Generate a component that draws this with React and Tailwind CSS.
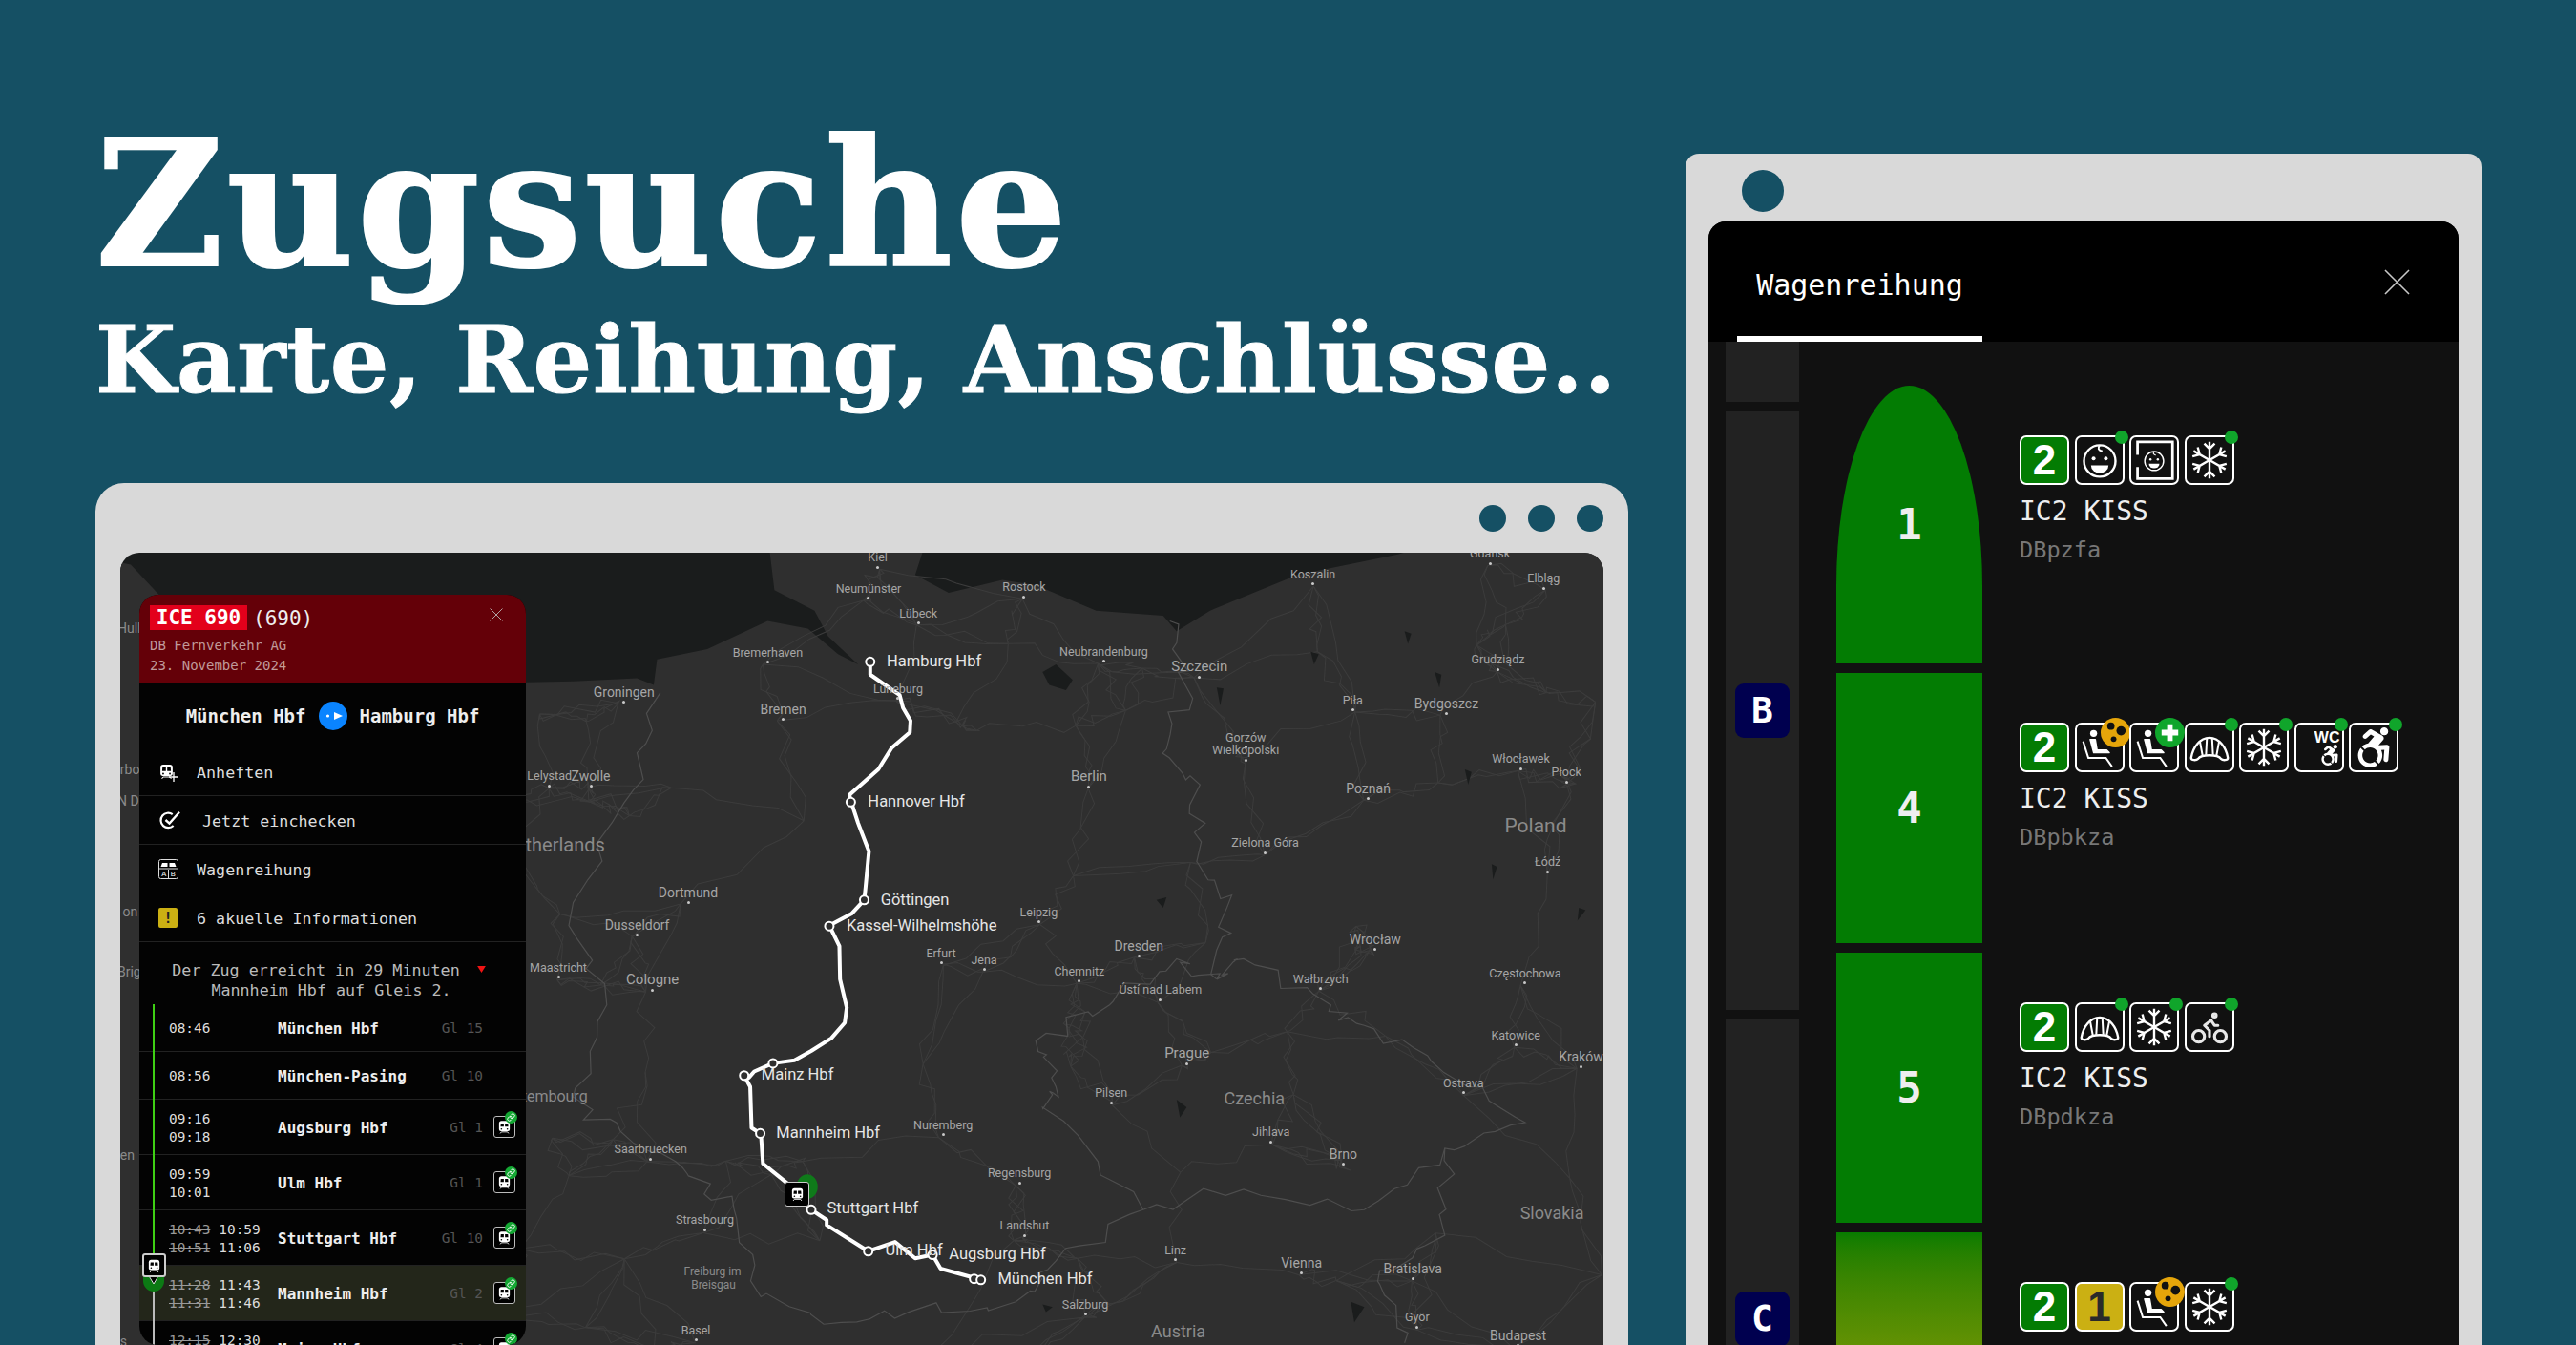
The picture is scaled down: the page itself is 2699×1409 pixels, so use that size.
import { Bike, Link } from 'lucide-react'
import { FaAccessibleIcon } from 'react-icons/fa'

// The map sketch uses a 1568x1568 grid over the page region starting at (600,570)
const px = (x) => 474 + x / 1.4255
const py = (y) => -9 + y / 1.8667
const pts = (list) => list.map(([x, y]) => `${px(x).toFixed(1)},${py(y).toFixed(1)}`).join(' ')

const land = [[-200, 1600], [-200, 500], [-110, 300], [-70, 270], [0, 268], [95, 262], [120, 275], [125, 225], [200, 205], [290, 150], [350, 165], [395, 215], [425, 235], [380, 180], [360, 130], [300, 90], [290, -20], [530, -20], [510, 60], [560, 95], [640, 70], [690, 80], [780, 130], [880, 140], [900, 170], [950, 130], [1080, 60], [1230, 20], [1340, -20], [1540, -20], [1540, 1570], [-200, 1570]]
const uk = [[-700, 30], [-660, 40], [-610, 110], [-590, 260], [-560, 600], [-560, 1600], [-700, 1600]]
const lakes = [[[700, 250], [720, 235], [745, 265], [735, 285], [710, 275]], [[1100, 210], [1112, 215], [1105, 235]], [[1240, 170], [1250, 175], [1245, 195]], [[1285, 250], [1295, 255], [1292, 280]], [[960, 280], [970, 282], [965, 315]], [[870, 695], [885, 690], [880, 710]], [[1330, 440], [1340, 445], [1335, 470]], [[1370, 625], [1378, 630], [1372, 655]], [[1500, 710], [1510, 715], [1498, 735]], [[1160, 1480], [1180, 1490], [1165, 1520]], [[700, 1485], [715, 1490], [705, 1500]], [[900, 1085], [915, 1100], [905, 1120]]]

const borderLines = [
  [[890, 150], [915, 280], [885, 400], [935, 470], [930, 620], [975, 710], [960, 850]],
  [[960, 850], [900, 810], [800, 900], [690, 970], [720, 1060], [700, 1100], [850, 1300], [1000, 1260], [1180, 1300], [1300, 1180], [1420, 1130], [1280, 1010], [1180, 940], [1130, 900], [1000, 810], [960, 850]],
  [[850, 1300], [720, 1400], [660, 1480], [500, 1500], [400, 1520], [280, 1470], [240, 1300], [170, 1230], [90, 1170], [0, 1080], [50, 900], [0, 700], [90, 480], [130, 290]],
  [[1300, 1180], [1300, 1350], [1200, 1440], [1240, 1560]],
]

const labels = [
  ['Kiel', 441, 27], ['Neumünster', 393, 88], ['Rostock', 642, 85], ['Koszalin', 1072, 60], ['Gdańsk', 1340, 20], ['Elbląg', 1426, 68],
  ['Lübeck', 488, 136], ['Bremerhaven', 239, 213], ['Neubrandenburg', 727, 211], ['Szczecin', 894, 239, 15], ['Grudziądz', 1342, 227],
  ['Groningen', 31, 289, 14], ['Lüneburg', 449, 284], ['Bremen', 280, 323, 14], ['Piła', 1150, 306], ['Bydgoszcz', 1257, 312, 14],
  ['Gorzów', 975, 379], ['Wielkopolski', 955, 404], ['Włocławek', 1373, 421], ['Płock', 1462, 447], ['Zwolle', -2, 454, 14], ['Lelystad', -68, 455, 12.5],
  ['Berlin', 744, 455, 15], ['Poznań', 1155, 478, 14], ['Zielona Góra', 984, 585], ['Łódź', 1437, 623], ['Dortmund', 128, 681, 14], ['Leipzig', 668, 721],
  ['Dusseldorf', 48, 744, 14], ['Wrocław', 1160, 772, 14], ['Erfurt', 528, 801], ['Jena', 595, 814], ['Dresden', 809, 785, 14], ['Chemnitz', 719, 836],
  ['Częstochowa', 1369, 840], ['Maastricht', -64, 829], ['Cologne', 80, 853, 15], ['Wałbrzych', 1076, 851], ['Ústí nad Labem', 816, 873], ['Katowice', 1372, 961],
  ['Kraków', 1473, 1002, 14], ['Prague', 884, 996, 15], ['Ostrava', 1300, 1055], ['Pilsen', 780, 1074], ['Jihlava', 1015, 1151], ['Nuremberg', 509, 1137],
  ['Brno', 1130, 1193, 14], ['Saarbruecken', 62, 1184], ['Regensburg', 620, 1231], ['Strasbourg', 154, 1323], ['Landshut', 638, 1334], ['Linz', 884, 1381],
  ['Vienna', 1058, 1405, 14], ['Bratislava', 1211, 1417, 14], ['Salzburg', 731, 1488], ['Györ', 1243, 1513], ['Basel', 162, 1538], ['Budapest', 1370, 1548, 14],
]

const plainLabels = [
  ['Freiburg im', 166, 1422, 12], ['Breisgau', 177, 1448, 12], ['Netherlands', -106, 588, 20], ['Poland', 1392, 551, 21], ['Czechia', 973, 1085, 18],
  ['Luxembourg', -104, 1081, 16], ['Slovakia', 1415, 1308, 18], ['Austria', 864, 1540, 18], ['Hull', -680, 164, 14], ['rbo', -676, 440, 14],
  ['N D', -680, 502, 14], ['on', -672, 719, 14], ['Brig', -680, 836, 14], ['en', -676, 1195, 14], ['s', -676, 1559, 14],
]

const stations = [
  ['Hamburg Hbf', 469, 230], ['Hannover Hbf', 441, 504], ['Göttingen', 460, 696], ['Kassel-Wilhelmshöhe', 409, 746], ['Mainz Hbf', 282, 1037],
  ['Mannheim Hbf', 304, 1151], ['Stuttgart Hbf', 380, 1300], ['Ulm Hbf', 467, 1382], ['Augsburg Hbf', 562, 1389], ['München Hbf', 635, 1437],
]

const route = [[443, 230], [443, 255], [487, 295], [492, 320], [503, 345], [502, 368], [475, 398], [455, 440], [412, 490], [415, 505], [425, 545], [441, 600], [436, 670], [434, 695], [415, 722], [382, 745], [397, 785], [398, 850], [408, 905], [405, 935], [385, 965], [355, 990], [330, 1008], [298, 1014], [270, 1030], [262, 1042], [255, 1038], [264, 1060], [266, 1140], [280, 1152], [283, 1210], [318, 1247], [355, 1300], [378, 1320], [378, 1330], [440, 1381], [480, 1363], [510, 1395], [536, 1388], [548, 1415], [598, 1433], [608, 1437]]
const stops = [[443, 230], [414, 504], [434, 695], [382, 746], [298, 1014], [255, 1038], [279, 1151], [355, 1300], [440, 1381], [536, 1388], [598, 1435], [608, 1437]]

let seed = 17
const rnd = () => {
  seed = (seed * 16807) % 2147483647
  return seed / 2147483647
}

// break a line into short wobbly pieces so it reads as a drawn road or border
function wobble(line, pieces, amount) {
  const out = [line[0]]
  for (let i = 1; i < line.length; i++) {
    const a = line[i - 1]
    const b = line[i]
    for (let t = 1; t < pieces; t++) {
      out.push([a[0] + ((b[0] - a[0]) * t) / pieces + (rnd() - 0.5) * amount, a[1] + ((b[1] - a[1]) * t) / pieces + (rnd() - 0.5) * amount])
    }
    out.push(b)
  }
  return out
}

// thin road network between nearby towns, only there to give the map its texture
function buildRoads() {
  const nodes = labels.map(([name, x, y]) => [x + name.length * 4, y + 22])
  for (let i = 0; i < 60; i++) nodes.push([rnd() * 1640 - 100, rnd() * 1500 + 150])
  const roads = []
  nodes.forEach((a) => {
    const near = nodes
      .filter((b) => b !== a)
      .sort((b, c) => Math.hypot(b[0] - a[0], b[1] - a[1]) - Math.hypot(c[0] - a[0], c[1] - a[1]))
      .slice(0, 3)
    near.forEach((b) => roads.push(wobble([a, b], 5, 28)))
  })
  return roads
}
const roads = buildRoads()
const borders = borderLines.map((b) => wobble(b, 6, 30))

const mono = "font-['DejaVu_Sans_Mono',monospace]"

function TrainGlyph({ className = 'w-5 h-5' }) {
  return (
    <svg viewBox="0 0 24 24" className={className}>
      <path d="M7 2h10a4 4 0 0 1 4 4v10a3 3 0 0 1-3 3H6a3 3 0 0 1-3-3V6a4 4 0 0 1 4-4z" fill="#fff" />
      <path d="M6 6.5h5v5H5.5zM13 6.5h5l.5 5H13z" fill="#000" />
      <circle cx="7" cy="15.5" r="1.3" fill="#000" />
      <circle cx="17" cy="15.5" r="1.3" fill="#000" />
      <path d="M7 20.5h10M5 23l2-2.5M19 23l-2-2.5" stroke="#fff" strokeWidth="1.5" fill="none" />
    </svg>
  )
}

function PinIcon() {
  return (
    <span className="relative w-[20px] h-[21px] block">
      <TrainGlyph className="w-[17px] h-[20px]" />
      <svg viewBox="0 0 10 10" className="absolute -right-[1px] bottom-0 w-[10px] h-[10px]">
        <path d="M5 0v10M0 5h10" stroke="#fff" strokeWidth="1.3" />
      </svg>
    </span>
  )
}

function CheckIcon() {
  return (
    <svg viewBox="0 0 26 22" className="w-[24px] h-[20px]">
      <path d="M16 4.5a8.5 8.5 0 1 0 1 13" stroke="#fff" strokeWidth="2.4" fill="none" />
      <path d="M8 11l4.5 4L24 2" stroke="#fff" strokeWidth="2.6" fill="none" />
    </svg>
  )
}

function CoachIcon() {
  return (
    <svg viewBox="0 0 21 21" className="w-[21px] h-[21px]">
      <rect x="0.5" y="0.5" width="20" height="20" rx="2" fill="none" stroke="#ddd" />
      <path d="M2.5 8l1.5-4h5.5v4zM11.5 8V4H17l1.5 4z" fill="#fff" />
      <path d="M1 10h19M10.5 11v9" stroke="#ddd" />
      <text x="5.8" y="18" fontSize="7.5" fill="#fff" textAnchor="middle" fontFamily="Liberation Sans">A</text>
      <text x="15.2" y="18" fontSize="7.5" fill="#fff" textAnchor="middle" fontFamily="Liberation Sans">B</text>
    </svg>
  )
}

function Close({ className }) {
  return (
    <svg viewBox="0 0 28 28" className={className}>
      <path d="M1 1L27 27M27 1L1 27" stroke="#c8c8c8" strokeWidth="1.6" />
    </svg>
  )
}

function MenuRow({ icon, textClass = '', children }) {
  return (
    <div className="h-[51px] flex items-center pl-[20px] text-[16.7px] text-[#ddd] border-b border-[#222]">
      <span className="w-[40px] flex items-center">{icon}</span>
      <span className={`pt-[3px] ${textClass}`}>{children}</span>
    </div>
  )
}

const stopsList = [
  { sched: ['08:46'], name: 'München Hbf', gl: 'Gl 15' },
  { sched: ['08:56'], name: 'München-Pasing', gl: 'Gl 10' },
  { sched: ['09:16', '09:18'], name: 'Augsburg Hbf', gl: 'Gl 1', link: true },
  { sched: ['09:59', '10:01'], name: 'Ulm Hbf', gl: 'Gl 1', link: true },
  { sched: ['10:43', '10:51'], real: ['10:59', '11:06'], name: 'Stuttgart Hbf', gl: 'Gl 10', link: true },
  { sched: ['11:28', '11:31'], real: ['11:43', '11:46'], name: 'Mannheim Hbf', gl: 'Gl 2', link: true, current: true },
  { sched: ['12:15', '12:21'], real: ['12:30', '12:36'], name: 'Mainz Hbf', gl: 'Gl 4', link: true },
]

function StopRow({ stop }) {
  const tall = stop.sched.length > 1
  return (
    <div className={`flex items-center pl-[31px] pr-[11px] border-b border-[#222] ${tall ? 'h-[58px]' : 'h-[50px]'} ${stop.current ? 'bg-[#23261a]' : ''}`}>
      <div className="w-[114px] shrink-0 flex gap-[9px] pt-[2px] text-[14.4px] leading-[18.7px]">
        <div className={stop.real ? 'line-through text-[#999]' : 'text-[#ddd]'}>
          {stop.sched.map((t) => <div key={t}>{t}</div>)}
        </div>
        {stop.real && (
          <div className="text-[#ddd]">
            {stop.real.map((t) => <div key={t}>{t}</div>)}
          </div>
        )}
      </div>
      <div className="flex-1 pt-[2px] font-bold text-[16px] text-[#eee] whitespace-nowrap">{stop.name}</div>
      <div className="pt-[2px] text-[14.4px] text-[#555] whitespace-nowrap">{stop.gl}</div>
      <div className="w-[23px] h-[23px] ml-[11px] shrink-0 relative">
        {stop.link && (
          <>
            <div className="w-[23px] h-[23px] rounded-[3px] border border-[#bbb] bg-black flex items-center justify-center">
              <TrainGlyph className="w-[15px] h-[17px]" />
            </div>
            <div className="absolute -top-[5px] -right-[2px] w-[13px] h-[13px] rounded-full bg-[#14a833] flex items-center justify-center">
              <Link className="w-[9px] h-[9px] text-white" strokeWidth={2.5} />
            </div>
          </>
        )}
      </div>
    </div>
  )
}

function TripPanel() {
  return (
    <div className={`absolute left-[20px] top-[44px] bottom-0 w-[405px] rounded-[20px] overflow-hidden bg-[#030303] ${mono}`}>
      <div className="h-[93px] bg-[#640008] pl-[11px] pt-[11px] relative">
        <div className="flex items-center gap-[6px] h-[26px]">
          <span className="h-[26px] w-[102px] bg-[#e3001b] text-white font-bold text-[21px] leading-[26px] text-center whitespace-nowrap">ICE 690</span>
          <span className="text-[21px] text-[#eee] mt-[3px]">(690)</span>
        </div>
        <div className="text-[14px] leading-[21px] text-[#c09a9a] mt-[6px]">DB Fernverkehr AG</div>
        <div className="text-[14px] leading-[21px] text-[#c09a9a]">23. November 2024</div>
        <Close className="absolute top-[14px] right-[24px] w-[14px] h-[14px]" />
      </div>
      <div className="h-[67px] flex items-center justify-center gap-[13px] pt-[1px] text-[19px] font-bold text-[#eee]">
        <span>München Hbf</span>
        <svg viewBox="0 0 30 30" className="w-[30px] h-[30px] shrink-0">
          <circle cx="15" cy="15" r="15" fill="#0a84ff" />
          <circle cx="9.5" cy="15" r="1.6" fill="#fff" />
          <path d="M16 11l9 4-9 4z" fill="#fff" />
        </svg>
        <span>Hamburg Hbf</span>
      </div>
      <MenuRow icon={<PinIcon />}>Anheften</MenuRow>
      <MenuRow icon={<CheckIcon />} textClass="ml-[6px]">Jetzt einchecken</MenuRow>
      <MenuRow icon={<CoachIcon />}>Wagenreihung</MenuRow>
      <MenuRow icon={<span className="w-[20px] h-[21px] rounded-[2px] bg-[#cbb013] text-[#222] font-bold text-[16px] leading-[21px] text-center">!</span>}>6 akuelle Informationen</MenuRow>
      <div className="h-[65px] pt-[19px] relative text-center text-[16.7px] leading-[21px] text-[#bbb]">
        <div className="pr-[35px] whitespace-nowrap">Der Zug erreicht in 29 Minuten</div>
        <div className="pr-[3px] whitespace-nowrap">Mannheim Hbf auf Gleis 2.</div>
        <svg viewBox="0 0 10 8" className="absolute left-[354px] top-[25px] w-[9px] h-[7px]">
          <path d="M0 0h10L5 8z" fill="#f01414" />
        </svg>
      </div>
      <div className="relative">
        {stopsList.map((s) => <StopRow key={s.name} stop={s} />)}
        <div className="absolute left-[14px] top-0 h-[264px] w-[2px] bg-[#3ecf14]" />
        <div className="absolute left-[14px] top-[285px] bottom-0 w-[2px] bg-[#bbb]" />
        <div className="absolute left-[4px] top-[269px] w-[22px] h-[18px] rounded-b-full bg-[#0c7a14] mt-[14px]" />
        <svg viewBox="0 0 14 10" className="absolute left-[8px] top-[283px] w-[14px] h-[10px]">
          <path d="M1 0h12L7 10z" fill="#000" stroke="#ddd" />
        </svg>
        <div className="absolute left-[3px] top-[261px] w-[25px] h-[25px] rounded-[3px] border-2 border-[#ccc] bg-black flex items-center justify-center">
          <TrainGlyph className="w-[15px] h-[18px]" />
        </div>
      </div>
    </div>
  )
}

function MapCanvas() {
  return (
    <div className="relative flex-1 bg-[#1a1c1c] rounded-t-[20px] overflow-hidden font-['Roboto',sans-serif]">
      <svg className="absolute inset-0 w-full h-full" viewBox="0 0 1552 830" preserveAspectRatio="xMinYMin slice">
        <polygon points={pts(land)} fill="#2f2f2f" />
        <polygon points={pts(uk)} fill="#2f2f2f" />
        {roads.map((r, i) => <polyline key={i} points={pts(r)} fill="none" stroke="#3c3c3c" strokeWidth="1" />)}
        {borders.map((b, i) => <polyline key={i} points={pts(b)} fill="none" stroke="#4e4e4e" strokeWidth="1.2" />)}
        {lakes.map((l, i) => <polygon key={i} points={pts(l)} fill="#1a1c1c" />)}
        <ellipse cx={px(349)} cy={py(1255)} rx="11" ry="13" fill="#0f7a1a" />
        <polyline points={pts(route)} fill="none" stroke="#fff" strokeWidth="4" strokeLinejoin="round" />
        {stops.map(([x, y], i) => <circle key={i} cx={px(x)} cy={py(y)} r="4.5" fill="#2f2f2f" stroke="#fff" strokeWidth="2" />)}
      </svg>
      {labels.map(([name, x, y, size = 12.5]) => (
        <div key={name} className="absolute flex flex-col items-center gap-[2px] text-[#a6a6a6] leading-none whitespace-nowrap" style={{ left: px(x), top: py(y) - size / 2, fontSize: size }}>
          {name}
          <span className="w-[3px] h-[3px] rounded-full bg-[#c8c8c8]" />
        </div>
      ))}
      {plainLabels.map(([name, x, y, size]) => (
        <div key={name} className="absolute text-[#8a8a8a] leading-none whitespace-nowrap" style={{ left: px(x), top: py(y) - size / 2, fontSize: size }}>
          {name}
        </div>
      ))}
      {stations.map(([name, x, y]) => (
        <div key={name} className="absolute text-[16.5px] leading-none text-[#e6e6e6] whitespace-nowrap -translate-y-1/2" style={{ left: px(x), top: py(y) }}>
          {name}
        </div>
      ))}
      <div className="absolute w-[26px] h-[26px] rounded-[3px] border border-[#ccc] bg-black flex items-center justify-center -translate-x-1/2 -translate-y-1/2" style={{ left: px(335), top: py(1271) }}>
        <TrainGlyph className="w-[15px] h-[18px]" />
      </div>
      <TripPanel />
    </div>
  )
}

function Feat({ dot, children, className = '' }) {
  return (
    <div className={`relative w-[52px] h-[52px] rounded-[7px] border-2 border-white flex items-center justify-center shrink-0 ${className}`}>
      {children}
      {dot && <span className="absolute -top-[7px] -right-[6px] w-[14px] h-[14px] rounded-full bg-[#10a52b]" />}
    </div>
  )
}

const ClassBadge = ({ n }) => (
  <Feat className={n === 2 ? 'bg-[#037c03]' : 'bg-[#cbb013]'}>
    <span className={`font-['Liberation_Sans',sans-serif] font-bold text-[44px] leading-none ${n === 2 ? 'text-white' : 'text-[#2a2a2a]'}`}>{n}</span>
  </Feat>
)

const Ico = ({ children, size = 'w-[44px] h-[44px]' }) => (
  <svg viewBox="0 0 48 48" className={size} fill="none" stroke="#fff">{children}</svg>
)

function BabyFaceShape() {
  return (
    <>
      <circle cx="24" cy="25" r="18" strokeWidth="2.6" />
      <circle cx="17" cy="22" r="2.2" fill="#fff" stroke="none" />
      <circle cx="31" cy="22" r="2.2" fill="#fff" stroke="none" />
      <path d="M14 30h20a10 9 0 0 1-20 0z" fill="#fff" stroke="none" />
      <path d="M24 7q-4 5 3 7" strokeWidth="2.2" />
    </>
  )
}

const BabyFace = () => <Ico><BabyFaceShape /></Ico>
const BabyFrame = () => (
  <Ico>
    <path d="M5 18V3h40v42H5V32" strokeWidth="3" />
    <g transform="translate(9.6 10) scale(0.6)"><BabyFaceShape /></g>
  </Ico>
)
const Flake = () => (
  <Ico>
    {[0, 60, 120, 180, 240, 300].map((a) => (
      <g key={a} transform={`rotate(${a} 24 24)`}>
        <path d="M24 24V3M24 11l-6-6M24 11l6-6" strokeWidth="2.6" />
      </g>
    ))}
  </Ico>
)

function SeatShape() {
  return (
    <>
      <circle cx="17" cy="8" r="4" fill="#fff" stroke="none" />
      <path d="M13 15h6l2 12h11l3 3H17z" fill="#fff" stroke="#fff" strokeWidth="1.5" strokeLinejoin="round" />
      <path d="M5 17l6 19h20l7 10" strokeWidth="2.2" />
    </>
  )
}

const Seat = ({ badge }) => (
  <>
    <Ico><SeatShape /></Ico>
    {badge === 'blind' && (
      <svg viewBox="0 0 32 32" className="absolute -top-[7px] -right-[8px] w-[31px] h-[31px]">
        <circle cx="16" cy="16" r="16" fill="#e5a50a" />
        <circle cx="11" cy="9" r="4" fill="#111" />
        <circle cx="22" cy="14" r="5" fill="#111" />
        <circle cx="14" cy="23" r="3" fill="#111" />
      </svg>
    )}
    {badge === 'plus' && (
      <svg viewBox="0 0 32 32" className="absolute -top-[7px] -right-[8px] w-[31px] h-[31px]">
        <circle cx="16" cy="16" r="16" fill="#10a52b" />
        <path d="M16 7v18M7 16h18" stroke="#fff" strokeWidth="6" />
      </svg>
    )}
  </>
)

const Croissant = () => (
  <Ico>
    <path d="M3 36C5 24 13 13 24 13s19 11 21 23c.5 3-6 3-8 1-2-3-5-4-13-4s-11 1-13 4c-2 2-8.500 2-8-1z" strokeWidth="2.6" strokeLinejoin="round" />
    <path d="M13 17l3 16M35 17l-3 16M21 13.500l-1 19M27 13.500l1 19" strokeWidth="2.200" />
  </Ico>
)

const Wc = () => (
  <div className="flex flex-col items-end w-[44px]">
    <span className="font-['Liberation_Sans',sans-serif] font-bold text-[16px] leading-[15px] text-white">WC</span>
    <FaAccessibleIcon className="w-[22px] h-[22px] text-white" />
  </div>
)

const wagons = [
  { no: '1', code: 'DBpzfa', h: 'h-[291px]', shape: 'bg-[#037c03] [border-radius:50%_50%_0_0/72%_72%_0_0]', feats: [
    <ClassBadge key="c" n={2} />, <Feat key="a" dot><BabyFace /></Feat>, <Feat key="b"><BabyFrame /></Feat>, <Feat key="d" dot><Flake /></Feat>,
  ] },
  { no: '4', code: 'DBpbkza', h: 'h-[283px]', shape: 'bg-[#037c03]', feats: [
    <ClassBadge key="c" n={2} />, <Feat key="a"><Seat badge="blind" /></Feat>, <Feat key="b"><Seat badge="plus" /></Feat>, <Feat key="d" dot><Croissant /></Feat>,
    <Feat key="e" dot><Flake /></Feat>, <Feat key="f" dot><Wc /></Feat>, <Feat key="g" dot><FaAccessibleIcon className="w-[42px] h-[42px] text-white" /></Feat>,
  ] },
  { no: '5', code: 'DBpdkza', h: 'h-[283px]', shape: 'bg-[#037c03]', feats: [
    <ClassBadge key="c" n={2} />, <Feat key="d" dot><Croissant /></Feat>, <Feat key="e" dot><Flake /></Feat>, <Feat key="b" dot><Bike className="w-[42px] h-[42px] text-[#e8e8e8]" strokeWidth={1.8} /></Feat>,
  ] },
  { no: '', code: '', h: 'h-[283px]', shape: 'bg-gradient-to-b from-[#067c00] to-[#b0ae0c]', feats: [
    <ClassBadge key="c" n={2} />, <ClassBadge key="k" n={1} />, <Feat key="a"><Seat badge="blind" /></Feat>, <Feat key="e" dot><Flake /></Feat>,
  ] },
]

function WagonRow({ wagon }) {
  return (
    <div className={`flex shrink-0 ${wagon.h}`}>
      <div className={`w-[153px] h-full flex items-center justify-center text-[44px] font-bold text-[#eee] ${wagon.shape}`}>{wagon.no}</div>
      <div className="ml-[39px] pt-[52px]">
        <div className="flex gap-[5.500px]">{wagon.feats}</div>
        {wagon.code && (
          <>
            <div className="text-[28px] leading-[34px] text-[#eee] mt-[11px]">IC2 KISS</div>
            <div className="text-[23.600px] leading-[30px] text-[#777] mt-[8px]">{wagon.code}</div>
          </>
        )}
      </div>
    </div>
  )
}

const SectorBlock = ({ letter, h }) => (
  <div className={`w-[77px] shrink-0 bg-[#222] flex items-center justify-center ${h}`}>
    {letter && (
      <div className="w-[57px] h-[57px] rounded-[9px] bg-[#00004f] flex items-center justify-center text-[38px] font-bold text-white">{letter}</div>
    )}
  </div>
)

function CoachPanel() {
  return (
    <div className={`flex-1 mx-[24px] rounded-t-[18px] overflow-hidden flex flex-col bg-[#111] ${mono}`}>
      <div className="h-[126px] shrink-0 bg-black flex justify-between items-center pr-[51px]">
        <div className="ml-[30px] w-[257px] h-full flex items-center justify-center border-b-[6px] border-white text-[30px] text-white pt-[13px]">Wagenreihung</div>
        <Close className="w-[27px] h-[27px]" />
      </div>
      <div className="flex-1 min-h-0 flex overflow-hidden">
        <div className="ml-[18px] flex flex-col gap-[10px]">
          <SectorBlock h="h-[63px]" />
          <SectorBlock letter="B" h="h-[627px]" />
          <SectorBlock letter="C" h="h-[627px]" />
        </div>
        <div className="ml-[39px] pt-[46px] flex flex-col gap-[10px]">
          {wagons.map((w, i) => <WagonRow key={i} wagon={w} />)}
        </div>
      </div>
    </div>
  )
}

export default function App() {
  return (
    <div className="w-[2699px] h-[1409px] flex overflow-hidden bg-[#155064]">
      <div className="w-[1766px] shrink-0 pl-[100px] pr-[60px] flex flex-col">
        <h1 className="font-['DejaVu_Serif',serif] font-bold text-[184px] leading-[184px] tracking-[3px] [-webkit-text-stroke:2px_white] text-white mt-[121px] whitespace-nowrap">Zugsuche</h1>
        <h2 className="font-['DejaVu_Serif',serif] font-bold text-[97px] leading-[97px] tracking-[0.7px] [-webkit-text-stroke:1px_white] text-white mt-[24px] whitespace-nowrap">Karte, Reihung, Anschlüsse..</h2>
        <div className="mt-[80px] flex-1 min-h-0 bg-[#d9d9d9] rounded-t-[30px] px-[26px] flex flex-col">
          <div className="h-[73px] shrink-0 flex items-center justify-end gap-[23px] pr-0">
            <span className="w-[28px] h-[28px] rounded-full bg-[#155064]" />
            <span className="w-[28px] h-[28px] rounded-full bg-[#155064]" />
            <span className="w-[28px] h-[28px] rounded-full bg-[#155064]" />
          </div>
          <MapCanvas />
        </div>
      </div>
      <div className="w-[834px] shrink-0 mt-[161px] bg-[#d9d9d9] rounded-t-[14px] flex flex-col">
        <div className="h-[71px] shrink-0 flex items-center pl-[59px] pt-[6px]">
          <span className="w-[44px] h-[44px] rounded-full bg-[#155064]" />
        </div>
        <CoachPanel />
      </div>
    </div>
  )
}
